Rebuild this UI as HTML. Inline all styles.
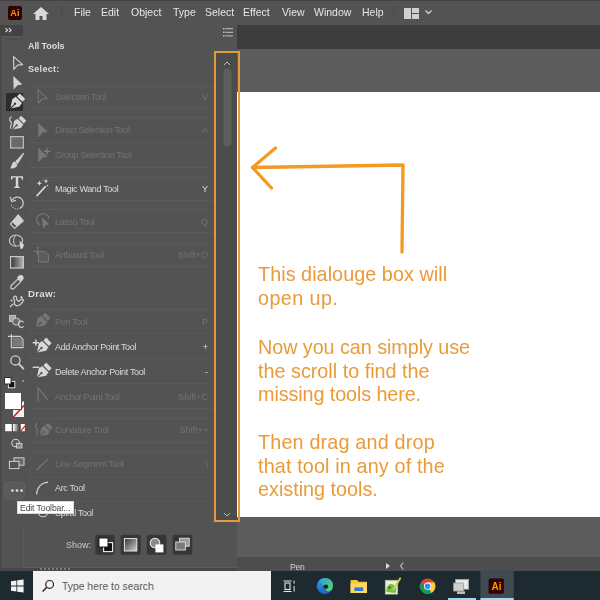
<!DOCTYPE html>
<html><head><meta charset="utf-8">
<style>
*{margin:0;padding:0;box-sizing:border-box}
html,body{width:600px;height:600px;overflow:hidden;-webkit-font-smoothing:antialiased;background:#535353;font-family:"Liberation Sans",sans-serif}
.a{position:absolute}
#menubar{left:0;top:0;width:600px;height:25px;background:#535353;border-top:1px solid #444}
.mi{position:absolute;top:6px;font-size:10.5px;color:#e6e6e6;line-height:12px}
#toolbar{left:0;top:25px;width:24px;height:546px;background:#535353;}
#panel{left:24px;top:25px;width:213px;height:546px;background:#535353}
#tabbar{left:237px;top:25px;width:363px;height:24px;background:#3d3d3d}
#canvas{left:237px;top:49px;width:363px;height:508px;background:#5c5c5c}
#artboard{left:237px;top:92px;width:363px;height:425px;background:#fff}
#status{left:237px;top:557px;width:363px;height:14px;background:#4d4d4d}
#taskbar{left:0;top:571px;width:600px;height:29px;background:#1d2a30}
#search{left:33px;top:571px;width:238px;height:29px;background:#f2f2f2}
.hd{position:absolute;left:28px;font-size:9px;font-weight:bold;color:#dcdcdc;line-height:11px;letter-spacing:-0.2px}
.box{position:absolute;left:30px;width:183px;border:1px solid #5b5b5b;border-left-color:#575757;border-right-color:#575757}
.sep{position:absolute;left:30px;width:183px;height:1px;background:#5a5a5a}
.tn{position:absolute;left:55px;font-size:9px;color:#dadada;line-height:11px;letter-spacing:-0.35px;white-space:nowrap}
.tn.d{color:#737373}
.sc{position:absolute;right:0;font-size:9px;color:#dadada;line-height:11px;text-align:right}
.sc.d{color:#737373}
.note{position:absolute;left:258px;font-size:19.8px;color:#ea9a38;line-height:24px;white-space:nowrap}
.a,.mi,.tn,.sc,.hd,.note{will-change:transform}
</style></head>
<body>
<!-- menu bar -->
<div id="menubar" class="a"></div>
<div class="a" style="left:8px;top:6px;width:14px;height:14px;background:#330000;border-radius:2px"></div>
<div class="a" style="left:8px;top:7.5px;width:14px;font-size:9px;font-weight:bold;color:#ff9a00;text-align:center;line-height:11px;letter-spacing:0.2px">Ai</div>
<svg class="a" style="left:33px;top:7px" width="16" height="13" viewBox="0 0 16 13"><path d="M8 0 L16 7 L13.5 7 L13.5 13 L9.5 13 L9.5 9 L6.5 9 L6.5 13 L2.5 13 L2.5 7 L0 7 Z" fill="#d8d8d8"/></svg>
<div class="a" style="left:61px;top:5px;width:1px;height:15px;background:#4a4a4a"></div>
<div class="mi" style="left:74px">File</div>
<div class="mi" style="left:101px">Edit</div>
<div class="mi" style="left:131px">Object</div>
<div class="mi" style="left:173px">Type</div>
<div class="mi" style="left:205px">Select</div>
<div class="mi" style="left:243px">Effect</div>
<div class="mi" style="left:282px">View</div>
<div class="mi" style="left:314px">Window</div>
<div class="mi" style="left:362px">Help</div>
<div class="a" style="left:393px;top:5px;width:1px;height:15px;background:#4a4a4a"></div>
<svg class="a" style="left:404px;top:8px" width="15" height="11" viewBox="0 0 15 11"><rect x="0" y="0" width="7" height="11" fill="#d0d0d0"/><rect x="8" y="0" width="7" height="5" fill="#d0d0d0"/><rect x="8" y="6" width="7" height="5" fill="#d0d0d0"/></svg>
<svg class="a" style="left:425px;top:10px" width="7" height="5" viewBox="0 0 7 5"><path d="M0.5 0.5 L3.5 3.5 L6.5 0.5" stroke="#d0d0d0" stroke-width="1.3" fill="none"/></svg>

<!-- main areas -->
<div id="toolbar" class="a"></div>
<div class="a" style="left:0;top:25px;width:23px;height:11px;background:#434343"></div>
<svg class="a" style="left:4px;top:27px" width="9" height="7" viewBox="0 0 9 7"><path d="M1.5 1.2 L3.5 3.2 L1.5 5.2 M5 1.2 L7 3.2 L5 5.2" fill="none" stroke="#dcdcdc" stroke-width="1.2"/></svg>
<div id="panel" class="a"></div>
<!-- toolbar icons -->
<svg class="a" style="left:0;top:0" width="30" height="571" viewBox="0 0 30 571">
<rect x="0" y="36" width="1.5" height="535" fill="#484848"/>
<rect x="1.5" y="36" width="21.5" height="1" fill="#5c5c5c"/>
<rect x="7" y="39" width="15" height="1" fill="#4a4a4a"/>
<g fill="none" stroke="#cfcfcf" stroke-width="1.2" stroke-linejoin="round">
<path d="M13.6 56.6 L22.6 64.6 L17.6 65.2 L13.8 69.4 Z"/>
</g>
<path d="M13.3 76 L22.4 84.6 L17.5 85.2 L13.6 89.6 Z" fill="#d2d2d2"/>
<rect x="6" y="93" width="17" height="18" fill="#2c2c2c"/>
<g transform="translate(10.4,108.4) rotate(45) scale(1.17)"><path d="M0 0 L-4.4 -6.6 L-3.8 -10.2 H3.8 L4.4 -6.6 Z" fill="#d8d8d8"/><rect x="-3.3" y="-14.6" width="6.6" height="3.4" rx="0.6" fill="#d8d8d8"/><path d="M0 0.2 V-5" stroke="#2c2c2c" stroke-width="0.9"/><circle cx="0" cy="-5.6" r="1" fill="#2c2c2c"/></g>
<!-- curvature -->
<g transform="translate(12.4,129.6) rotate(45) scale(1.1)"><path d="M0 0 L-4.4 -6.6 L-3.8 -10.2 H3.8 L4.4 -6.6 Z" fill="#d2d2d2"/><rect x="-3.3" y="-14.6" width="6.6" height="3.4" rx="0.6" fill="#d2d2d2"/><path d="M0 0.2 V-5" stroke="#535353" stroke-width="0.9"/><circle cx="0" cy="-5.6" r="1" fill="#535353"/></g>
<path d="M12 117 C9 117 9 120 11 122 C13 124 9 126 11 129" fill="none" stroke="#d2d2d2" stroke-width="1.1"/>
<!-- rectangle -->
<rect x="10.6" y="136.6" width="12.8" height="11.4" fill="#6a6a6a" stroke="#bdbdbd" stroke-width="1.2"/>
<!-- brush -->
<path d="M23.4 153.6 L16 161.6 L17.6 163.2 Z" fill="#d2d2d2" stroke="#d2d2d2" stroke-width="1.2" stroke-linejoin="round"/>
<path d="M14.8 161.6 C12 162 12 165 10.4 168.4 C13.6 168.6 17.2 167.4 17.4 164.4 Z" fill="#d2d2d2"/>
<!-- type T -->
<path d="M11 176.2 H23 V179.8 H22 C21.8 178 21.2 177.6 19.4 177.6 H18.2 V186.4 L19.8 187 V188 H14.2 V187 L15.8 186.4 V177.6 H14.6 C12.8 177.6 12.2 178 12 179.8 H11 Z" fill="#d6d6d6"/>
<!-- rotate -->
<path d="M12.4 200 C14 196.8 18.8 196 21.6 198.8 C24.4 201.6 23.6 207 19.6 208.6" fill="none" stroke="#cfcfcf" stroke-width="1.2"/>
<path d="M18 209 C14.6 209.2 11.6 207 10.8 203.8" fill="none" stroke="#bdbdbd" stroke-width="1.1" stroke-dasharray="1.2 1.2"/>
<path d="M10.4 196.8 L11.6 201.6 L16 200.4" fill="none" stroke="#cfcfcf" stroke-width="1.2"/>
<!-- eraser -->
<path d="M18.2 215 L23.2 221 L14.6 228.4 L10.4 224.2 Z" fill="none" stroke="#cfcfcf" stroke-width="1.2" stroke-linejoin="round"/>
<path d="M18.2 215 L23.2 221 L16.6 226.6 L12.2 222 Z" fill="#d0d0d0"/>
<!-- shape builder -->
<ellipse cx="16" cy="240.6" rx="6.6" ry="5.6" fill="none" stroke="#cfcfcf" stroke-width="1.1"/>
<path d="M16 235.6 C13 236.6 12.6 244 16 246" fill="none" stroke="#cfcfcf" stroke-width="1"/>
<path d="M19.6 240.6 L24 245 L22.6 248.6 L20.4 249 Z" fill="#dadada"/>
<!-- gradient -->
<defs><linearGradient id="gr" x1="0" x2="1" y1="0" y2="0"><stop offset="0" stop-color="#353535"/><stop offset="1" stop-color="#b4b4b4"/></linearGradient>
<linearGradient id="gr2" x1="0" x2="1" y1="0" y2="0"><stop offset="0" stop-color="#fff"/><stop offset="1" stop-color="#3a3a3a"/></linearGradient></defs>
<rect x="10.6" y="256.6" width="12.8" height="11.4" fill="url(#gr)" stroke="#c8c8c8" stroke-width="1.2"/>
<!-- eyedropper -->
<path d="M11 288.6 L10.8 286 L18 278.8 L20.8 281.6 L13.6 288.8 Z" fill="none" stroke="#cfcfcf" stroke-width="1.2" stroke-linejoin="round"/>
<path d="M17 277.4 L18.6 275.8 C19.8 274.6 21.6 274.6 22.8 275.8 C24 277 24 278.8 22.8 280 L21.2 281.6 Z" fill="#d6d6d6"/>
<!-- puppet warp -->
<path d="M10 307 L13.4 303.6 M14.4 300 C13 298 13.6 296.4 15 296.2 C16.4 296 17 297.4 16.4 299.2 L18.4 301.4 L22 299 L23.6 300 C22.4 303 20 305.4 16.8 306 L14.6 304.4 Z" fill="none" stroke="#d0d0d0" stroke-width="1.2" stroke-linejoin="round"/>
<circle cx="21.4" cy="297.4" r="1.2" fill="#d0d0d0"/><circle cx="11.6" cy="300.6" r="1" fill="#d0d0d0"/>
<!-- CCC -->
<rect x="9.4" y="315.4" width="6" height="6" fill="#a8a8a8" stroke="#cfcfcf" stroke-width="0.8"/>
<circle cx="16.2" cy="321.6" r="3.6" fill="#6a6a6a" stroke="#cfcfcf" stroke-width="1"/>
<path d="M23.4 322.4 C22.6 320.8 20.4 320.6 19.2 321.8 C17.8 323.4 18.4 327 21 327.4 C22.2 327.6 23 327 23.6 326.4" fill="none" stroke="#cfcfcf" stroke-width="1.2"/>
<!-- artboard -->
<path d="M11.4 334 V347.6 H23 V339.4 L20 336.4 H8" fill="none" stroke="#cfcfcf" stroke-width="1.1"/>
<path d="M12.6 337.6 H19.4 L22 340 V346.4 H12.6 Z" fill="#7a7a7a"/>
<!-- zoom -->
<circle cx="15.4" cy="360.4" r="4.6" fill="none" stroke="#cfcfcf" stroke-width="1.3"/>
<path d="M18.8 363.8 L23.4 368.6" stroke="#cfcfcf" stroke-width="1.8" stroke-linecap="round"/>
<!-- default fill/stroke -->
<rect x="8.4" y="381.4" width="6.4" height="6.4" fill="#111" stroke="#eee" stroke-width="0.9"/>
<rect x="4.6" y="377.6" width="6.4" height="6.4" fill="#fff" stroke="#222" stroke-width="0.9"/>
<circle cx="23" cy="381" r="0.9" fill="#aaa"/>
<!-- big fill/stroke -->
<rect x="13" y="401.5" width="11" height="15.5" fill="#f4f4f4"/>
<path d="M13.4 417 L24 405.6" stroke="#e01010" stroke-width="1.5"/>
<rect x="4.5" y="392.5" width="17" height="17" fill="#fff" stroke="#535353" stroke-width="1"/>
<!-- color modes -->
<rect x="5.2" y="424" width="6.6" height="7.2" fill="#fff"/>
<rect x="13" y="424" width="6.6" height="7.2" fill="url(#gr2)"/>
<rect x="20.8" y="424" width="4" height="7.2" fill="#fff"/>
<path d="M20.8 431.2 L24.8 426" stroke="#e01010" stroke-width="1.2"/>
<!-- draw modes -->
<circle cx="15.6" cy="443" r="3.8" fill="#5a5a5a" stroke="#cfcfcf" stroke-width="1.1"/>
<rect x="16.4" y="443.4" width="5.6" height="4.6" fill="#8a8a8a" stroke="#cfcfcf" stroke-width="0.9"/>
<!-- screen mode -->
<rect x="14" y="457.8" width="10" height="7.4" fill="#6a6a6a" stroke="#cfcfcf" stroke-width="1"/>
<rect x="9.4" y="461.4" width="9.6" height="7.2" fill="#535353" stroke="#cfcfcf" stroke-width="1"/>
<!-- dots button -->
<rect x="4.5" y="482" width="20" height="17" rx="3" fill="#5a5a5a" stroke="#616161" stroke-width="1"/>
<circle cx="12.4" cy="490.6" r="1.3" fill="#e0e0e0"/><circle cx="17" cy="490.6" r="1.3" fill="#e0e0e0"/><circle cx="21.6" cy="490.6" r="1.3" fill="#e0e0e0"/>
</svg>

<div id="tabbar" class="a"></div>
<div id="canvas" class="a"></div>
<div id="artboard" class="a"></div>
<div id="status" class="a"></div>
<div class="a" style="left:290px;top:562px;font-size:8.6px;color:#d0d0d0;line-height:11px;letter-spacing:-0.2px">Pen</div>
<div class="a" style="left:385.5px;top:562.5px;width:0;height:0;border-left:4.5px solid #d8d8d8;border-top:3.6px solid transparent;border-bottom:3.6px solid transparent"></div>
<svg class="a" style="left:399px;top:561px" width="6" height="10" viewBox="0 0 6 10"><path d="M4.2 1.6 L1.6 5 L4.2 8.4" fill="none" stroke="#bdbdbd" stroke-width="1.1"/></svg>

<!-- panel -->
<div class="hd" style="top:41px;letter-spacing:-0.1px">All Tools</div>
<svg class="a" style="left:222px;top:27px" width="12" height="11" viewBox="0 0 12 11"><g fill="#c4c4c4"><rect x="1" y="1" width="1.6" height="1.4"/><rect x="3.6" y="1.2" width="7.4" height="1"/><rect x="1" y="4.6" width="1.6" height="1.4"/><rect x="3.6" y="4.8" width="7.4" height="1"/><rect x="1" y="8.2" width="1.6" height="1.4"/><rect x="3.6" y="8.4" width="7.4" height="1"/></g></svg>
<div class="hd" style="top:63.6px;letter-spacing:0.3px">Select:</div>
<div class="hd" style="top:287.8px;letter-spacing:0.25px;font-size:9.7px">Draw:</div>


<!-- panel rows -->
<div class="box" style="top:86px;height:23px"></div>
<div class="box" style="top:117px;height:51px"></div>
<div class="sep" style="top:142px"></div>
<div class="box" style="top:177px;height:24px"></div>
<div class="box" style="top:209px;height:24px"></div>
<div class="box" style="top:243px;height:24px"></div>
<div class="box" style="top:309px;height:100px"></div>
<div class="sep" style="top:333px"></div>
<div class="sep" style="top:358px"></div>
<div class="sep" style="top:383px;left:80px;width:133px"></div>
<div class="box" style="top:418px;height:25px"></div>
<div class="box" style="top:452px;height:73px;border-bottom:none"></div>
<div class="a" style="left:23px;top:527px;width:214px;height:41px;border-left:1px solid #5a5a5a;border-bottom:1px solid #5d5d5d"></div>
<div class="sep" style="top:477px"></div>
<div class="sep" style="top:501px"></div>

<div class="tn d" style="top:91.5px">Selection Tool</div><div class="sc d" style="top:91.5px;left:150px;width:58px">V</div>
<div class="tn d" style="top:125.3px">Direct Selection Tool</div><div class="sc d" style="top:125.3px;left:150px;width:58px">A</div>
<div class="tn d" style="top:150.2px">Group Selection Tool</div>
<div class="tn" style="top:183.8px">Magic Wand Tool</div><div class="sc" style="top:183.8px;left:150px;width:58px">Y</div>
<div class="tn d" style="top:216.5px">Lasso Tool</div><div class="sc d" style="top:216.5px;left:150px;width:58px">Q</div>
<div class="tn d" style="top:250.4px">Artboard Tool</div><div class="sc d" style="top:250.4px;left:150px;width:58px">Shift+O</div>
<div class="tn d" style="top:316.5px">Pen Tool</div><div class="sc d" style="top:316.5px;left:150px;width:58px">P</div>
<div class="tn" style="top:341.5px">Add Anchor Point Tool</div><div class="sc" style="top:341.5px;left:150px;width:58px">+</div>
<div class="tn" style="top:366.8px">Delete Anchor Point Tool</div><div class="sc" style="top:366.8px;left:150px;width:58px">-</div>
<div class="tn d" style="top:391.8px">Anchor Point Tool</div><div class="sc d" style="top:391.8px;left:150px;width:58px">Shift+C</div>
<div class="tn d" style="top:424.5px">Curvature Tool</div><div class="sc d" style="top:424.5px;left:150px;width:58px">Shift+~</div>
<div class="tn d" style="top:458.5px">Line Segment Tool</div><div class="sc d" style="top:458.5px;left:150px;width:58px">\</div>
<div class="tn" style="top:483.4px">Arc Tool</div>
<div class="tn" style="top:508.3px">Spiral Tool</div>


<!-- panel icons -->
<svg class="a" style="left:0;top:0" width="240" height="571" viewBox="0 0 240 571">
<g fill="none" stroke="#757575" stroke-width="1.1" stroke-linejoin="round">
<path d="M38 89.4 L47 98.6 L42.2 99 L38.4 103 Z"/>
</g>
<path d="M38 122.4 L47.8 132 L42.8 132.6 L38.4 137.4 Z" fill="#777"/>
<path d="M38 147.4 L47.8 157 L42.8 157.6 L38.4 162.4 Z" fill="#777"/>
<path d="M44 151.4 H50 M47 148.4 V154.4" stroke="#808080" stroke-width="1.3"/>
<!-- magic wand -->
<path d="M37 195.6 L45.4 186.6" stroke="#d8d8d8" stroke-width="1.6" stroke-linecap="round"/>
<path d="M39.4 180.6 L40.2 182.4 L42 183.2 L40.2 184 L39.4 185.8 L38.6 184 L36.8 183.2 L38.6 182.4 Z" fill="#d8d8d8"/>
<path d="M46 178.8 L46.7 180.4 L48.3 181.1 L46.7 181.8 L46 183.4 L45.3 181.8 L43.7 181.1 L45.3 180.4 Z" fill="#d8d8d8"/>
<circle cx="47.6" cy="185.6" r="0.8" fill="#d8d8d8"/><circle cx="43" cy="180" r="0.6" fill="#bbb"/>
<!-- lasso -->
<path d="M39 224 C35 222 35.6 216 40.6 214.2 C45.4 212.6 49.6 215.4 48.6 219" fill="none" stroke="#777" stroke-width="1.1"/>
<path d="M38.8 222 C37.4 224.6 40 226.4 40.2 224" fill="none" stroke="#777" stroke-width="1"/>
<path d="M42 217.6 L49.4 224.6 L45.6 225 L43 228.4 Z" fill="#7a7a7a"/>
<!-- artboard -->
<path d="M33.6 251.5 H40.6 M37.6 246.2 V255" fill="none" stroke="#7a7a7a" stroke-width="1"/>
<path d="M38.5 251.5 H45 L48.5 255 V262 H38.5 Z" fill="#5c5c5c" stroke="#787878" stroke-width="1"/>
<!-- pen dim -->
<g transform="translate(35.8,327.4) rotate(45) scale(1.17)"><path d="M0 0 L-4.4 -6.6 L-3.8 -10.2 H3.8 L4.4 -6.6 Z" fill="#757575"/><rect x="-3.3" y="-14.6" width="6.6" height="3.4" rx="0.6" fill="#757575"/><path d="M0 0.2 V-5" stroke="#535353" stroke-width="0.9"/><circle cx="0" cy="-5.6" r="1" fill="#535353"/></g>
<!-- add anchor -->
<g transform="translate(36.9,352.5) rotate(45) scale(1.17)"><path d="M0 0 L-4.4 -6.6 L-3.8 -10.2 H3.8 L4.4 -6.6 Z" fill="#d8d8d8"/><rect x="-3.3" y="-14.6" width="6.6" height="3.4" rx="0.6" fill="#d8d8d8"/><path d="M0 0.2 V-5" stroke="#535353" stroke-width="0.9"/><circle cx="0" cy="-5.6" r="1" fill="#535353"/></g>
<path d="M32.7 342.7 H39 M35.85 339.6 V345.8" stroke="#d8d8d8" stroke-width="1.4"/>
<!-- delete anchor -->
<g transform="translate(36.9,377.6) rotate(45) scale(1.17)"><path d="M0 0 L-4.4 -6.6 L-3.8 -10.2 H3.8 L4.4 -6.6 Z" fill="#d8d8d8"/><rect x="-3.3" y="-14.6" width="6.6" height="3.4" rx="0.6" fill="#d8d8d8"/><path d="M0 0.2 V-5" stroke="#535353" stroke-width="0.9"/><circle cx="0" cy="-5.6" r="1" fill="#535353"/></g>
<path d="M32.7 367.3 H39.4" stroke="#d8d8d8" stroke-width="1.4"/>
<!-- anchor point -->
<path d="M38 401.6 V387.8 L47.6 399.6" fill="none" stroke="#7a7a7a" stroke-width="1.1" stroke-linejoin="round"/>
<!-- curvature dim -->
<g transform="translate(39.6,436.2) rotate(45) scale(1.05)"><path d="M0 0 L-4.4 -6.6 L-3.8 -10.2 H3.8 L4.4 -6.6 Z" fill="#767676"/><rect x="-3.3" y="-14.6" width="6.6" height="3.4" rx="0.6" fill="#767676"/><path d="M0 0.2 V-5" stroke="#535353" stroke-width="0.9"/><circle cx="0" cy="-5.6" r="1" fill="#535353"/></g>
<path d="M38 423.6 C35 423.6 35 427 37 429 C39 431 35 433 37.4 436.4" fill="none" stroke="#767676" stroke-width="1.1"/>
<!-- line segment -->
<path d="M36.8 470 L48 458.8" stroke="#7a7a7a" stroke-width="1.1"/>
<!-- arc -->
<path d="M36.6 494.4 C37 487.6 41.2 482.8 48 482.2" fill="none" stroke="#d8d8d8" stroke-width="1.2"/>
<!-- spiral -->
<circle cx="43" cy="512.4" r="4.4" fill="none" stroke="#d0d0d0" stroke-width="1.1"/>
<!-- scrollbar -->
<rect x="216" y="53" width="21" height="467" fill="#4c4c4c"/>
<path d="M224 65 L227 62 L230 65" fill="none" stroke="#bdbdbd" stroke-width="1"/>
<rect x="223.5" y="68.5" width="8" height="78" rx="4" fill="#5e5e5e"/>
<path d="M224 513 L227 516 L230 513" fill="none" stroke="#bdbdbd" stroke-width="1"/>
</svg>
<!-- show area -->
<div class="a" style="left:66px;top:539.5px;font-size:9px;color:#c8c8c8;line-height:11px">Show:</div>
<svg class="a" style="left:0;top:520px" width="240" height="51" viewBox="0 520 240 51">
<rect x="95.3" y="534.7" width="19.5" height="20" rx="2" fill="#363636"/>
<rect x="120.7" y="534.7" width="20" height="20" rx="2" fill="#363636"/>
<rect x="146.8" y="534.7" width="19.7" height="20" rx="2" fill="#363636"/>
<rect x="172.7" y="534.7" width="19.5" height="20" rx="2" fill="#363636"/>
<rect x="103.6" y="542.6" width="9" height="9" fill="#111" stroke="#f0f0f0" stroke-width="1.1"/>
<rect x="99" y="538" width="9" height="9" fill="#fff" stroke="#111" stroke-width="0.9"/>
<defs><linearGradient id="gr3" x1="0" x2="1" y1="0" y2="1"><stop offset="0" stop-color="#333"/><stop offset="1" stop-color="#d0d0d0"/></linearGradient></defs>
<rect x="124.4" y="538.6" width="12.4" height="12.4" fill="url(#gr3)" stroke="#e6e6e6" stroke-width="1"/>
<circle cx="155" cy="543" r="4.8" fill="#8a8a8a" stroke="#eaeaea" stroke-width="1.1"/>
<rect x="155.4" y="544.4" width="8" height="8" fill="#fff"/>
<rect x="179.6" y="538.2" width="9.6" height="8" fill="#9a9a9a" stroke="#e0e0e0" stroke-width="0.9"/>
<rect x="175.8" y="542" width="9.6" height="8" fill="#7a7a7a" stroke="#e0e0e0" stroke-width="0.9"/>
</svg>
<div class="a" style="left:0;top:567.5px;width:237px;height:4px;background:#474747"></div>
<div class="a" style="left:40px;top:568px;width:30px;height:1.5px;background:repeating-linear-gradient(90deg,#7a7a7a 0 2px,transparent 2px 4px)"></div>
<!-- tooltip -->
<div class="a" style="left:17px;top:501px;width:56.5px;height:13px;background:#fdfdfd;border:1px solid #d8d8d8"></div>
<div class="a" style="left:20px;top:502.5px;font-size:8.6px;color:#474747;line-height:11px;letter-spacing:-0.1px;white-space:nowrap">Edit Toolbar...</div>

<!-- orange highlight -->
<div class="a" style="left:214px;top:51px;width:26px;height:471px;border:2px solid #e29a3a"></div>

<!-- annotation -->
<svg class="a" style="left:0;top:0" width="600" height="600" viewBox="0 0 600 600">
<g stroke="#f29a22" stroke-width="3.3" fill="none" stroke-linecap="round" stroke-linejoin="round">
<path d="M252.5 167.5 L403 165 L402 252"/>
<path d="M275.5 148 L252.5 167.5 L271.5 188"/>
</g></svg>
<div class="note" style="top:262px;letter-spacing:0.05px">This dialouge box will</div>
<div class="note" style="top:286px;letter-spacing:0.4px">open up.</div>
<div class="note" style="top:335px;letter-spacing:-0.06px">Now you can simply use</div>
<div class="note" style="top:358.5px">the scroll to find the</div>
<div class="note" style="top:382px;letter-spacing:-0.1px">missing tools here.</div>
<div class="note" style="top:430px;letter-spacing:0.17px">Then drag and drop</div>
<div class="note" style="top:453.5px;letter-spacing:0.14px">that tool in any of the</div>
<div class="note" style="top:477px">existing tools.</div>

<!-- taskbar -->
<div id="taskbar" class="a"></div>
<div id="search" class="a"></div>

<svg class="a" style="left:0;top:571px" width="600" height="29" viewBox="0 571 600 29">
<!-- windows logo -->
<g fill="#f0f0f0">
<path d="M11 581.2 L16.4 580.4 V585.6 H11 Z"/><path d="M17.2 580.3 L23.6 579.4 V585.6 H17.2 Z"/>
<path d="M11 586.4 H16.4 V591.6 L11 590.8 Z"/><path d="M17.2 586.4 H23.6 V592.6 L17.2 591.7 Z"/>
</g>
<!-- search icon -->
<circle cx="49.6" cy="584.4" r="3.9" fill="none" stroke="#222" stroke-width="1.2"/>
<path d="M46.8 587.2 L42.6 591.4" stroke="#222" stroke-width="1.4"/>
<!-- task view -->
<g fill="none" stroke="#e6e6e6" stroke-width="1.1">
<path d="M283.5 581 H291.5 M283.5 591.5 H291.5"/>
<rect x="285" y="583" width="5" height="6.5"/>
</g>
<rect x="293.6" y="580.6" width="1" height="3" fill="#e6e6e6"/><rect x="293.6" y="586" width="1" height="5.6" fill="#e6e6e6"/>
<!-- edge -->
<defs>
<linearGradient id="eg" x1="0" y1="0" x2="0.3" y2="1"><stop offset="0" stop-color="#2aa6e8"/><stop offset="1" stop-color="#1f5fc4"/></linearGradient>
<linearGradient id="eg2" x1="0" y1="0" x2="1" y2="1"><stop offset="0" stop-color="#2a9fe0"/><stop offset="1" stop-color="#62d65a"/></linearGradient>
</defs>
<circle cx="324.8" cy="586.2" r="8" fill="url(#eg)"/>
<path d="M319 580.6 C322 577.2 329 577 332 581.6 C333.6 584.2 333.4 588.6 331 590.6 C328.6 592.2 325.4 591.2 325.6 588.8 Z" fill="url(#eg2)"/>
<ellipse cx="325.8" cy="586.6" rx="2.4" ry="2.2" fill="#17232a"/>
<!-- explorer -->
<path d="M350.6 580 H357 L358.6 581.8 H367 V593 H350.6 Z" fill="#f6c342"/>
<rect x="350.6" y="583.4" width="16.4" height="9.6" fill="#ffd75e"/>
<rect x="354.4" y="587.4" width="8.8" height="3.6" fill="#2b7bd6"/>
<!-- notepad++ -->
<rect x="385.2" y="580.2" width="12.6" height="14" fill="#e8f0e0" stroke="#9ab07a" stroke-width="0.6"/>
<path d="M386.4 592 C386 586 389 583 393 584.4 C396.6 585.8 397 590 395.4 593 Z" fill="#7ac143"/>
<path d="M393 590 L400.6 577.8" stroke="#c9d84a" stroke-width="1.8"/>
<circle cx="389.6" cy="587.4" r="1" fill="#333"/>
<!-- chrome -->
<circle cx="427.6" cy="586.2" r="7.8" fill="#db4437"/>
<path d="M427.6 586.2 L420.8 590.1 A7.8 7.8 0 0 0 431.5 592.95 Z" fill="#0f9d58"/>
<path d="M427.6 586.2 L431.5 592.95 A7.8 7.8 0 0 0 434.4 582.3 Z" fill="#ffcd40"/>
<path d="M427.6 586.2 L434.4 582.3 L427.6 582.3 Z" fill="#ffcd40"/>
<path d="M427.6 586.2 L420.8 590.1 A7.8 7.8 0 0 1 420 583.4 Z" fill="#0f9d58"/>
<circle cx="427.6" cy="586.2" r="3.6" fill="#fff"/>
<circle cx="427.6" cy="586.2" r="2.8" fill="#4285f4"/>
<!-- gray app -->
<rect x="455.6" y="579.6" width="13" height="9.6" fill="#e8e8e8" stroke="#aaa" stroke-width="0.8"/>
<rect x="453.6" y="583" width="10" height="8" fill="#cfcfcf" stroke="#9a9a9a" stroke-width="0.8"/>
<rect x="457" y="591.4" width="8" height="2.6" fill="#bdbdbd"/>
<rect x="448" y="598" width="28" height="2" fill="#9fd8f6"/>
<!-- ai active -->
<rect x="480.4" y="571" width="33.3" height="29" fill="#3f4b50"/>
<rect x="480.4" y="598" width="33.3" height="2" fill="#a6d9f4"/>
<rect x="488.6" y="578.4" width="15.2" height="15.4" rx="1.5" fill="#330000"/>
</svg>
<div class="a" style="left:488.6px;top:580.6px;width:15.2px;font-size:10px;font-weight:bold;color:#ff9a00;text-align:center;line-height:11px">Ai</div>

<div class="a" style="left:62px;top:580px;font-size:11.8px;color:#505050;line-height:13px;white-space:nowrap;transform:scaleX(0.88);transform-origin:0 0">Type here to search</div>
</body></html>
